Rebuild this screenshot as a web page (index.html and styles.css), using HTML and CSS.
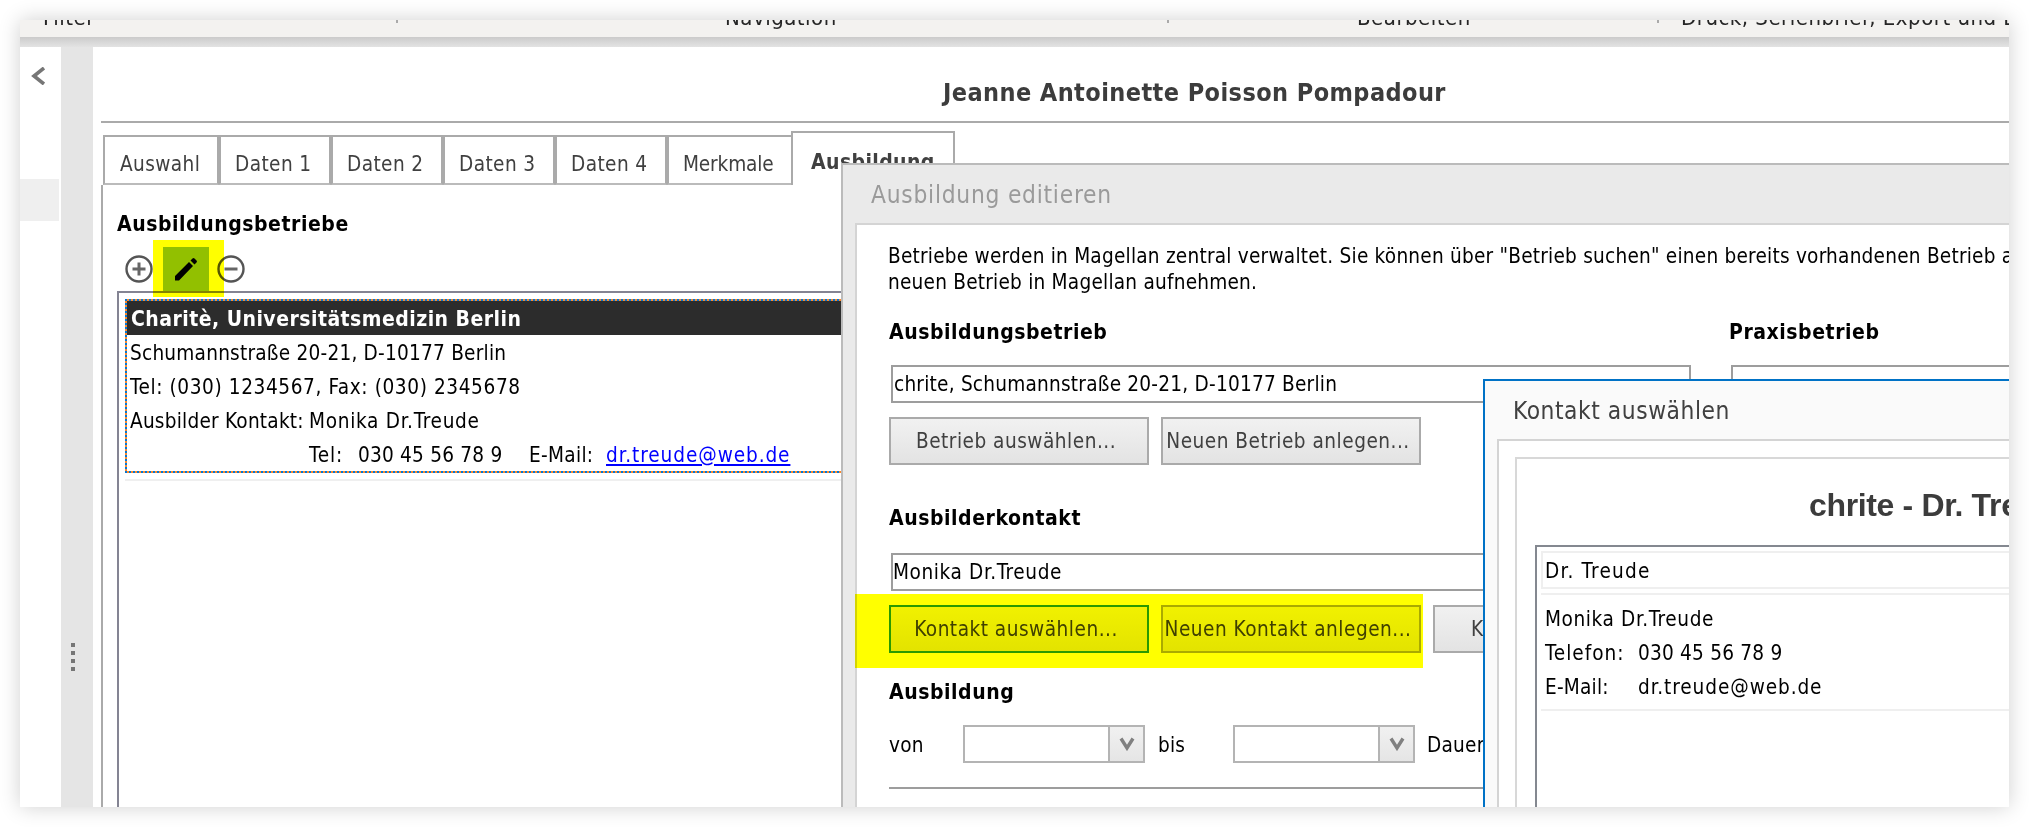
FILE: index.html
```
<!DOCTYPE html>
<html lang="de">
<head>
<meta charset="utf-8">
<title>Magellan – Ausbildung</title>
<link rel="stylesheet" href="styles.css">
</head>
<body>
<div class="screen">
  <header class="ribbon">
    <div class="group group-filter"><span>Filter</span><i class="tick"></i></div>
    <div class="group group-nav"><span>Navigation</span><i class="tick"></i></div>
    <div class="group group-edit"><span>Bearbeiten</span><i class="tick"></i></div>
    <div class="group group-print"><span>Druck, Serienbrief, Export und E</span></div>
  </header>
  <div class="ribbon-shadow"></div>
  <div class="workspace">
    <aside class="sidebar">
      <svg class="collapse" viewBox="0 0 14 18"><path d="M13 1 3 9l10 8" fill="none" stroke="#767676" stroke-width="3.600"/></svg>
      <div class="side-item"></div>
    </aside>
    <div class="splitter"><i></i><i></i><i></i><i></i></div>
    <main class="record">
      <h1 class="record-title"><span>Jeanne Antoinette Poisson Pompadour</span></h1>
      <nav class="tabs">
        <div class="tab tab-first"><span>Auswahl</span></div>
        <div class="tab"><span>Daten 1</span></div>
        <div class="tab"><span>Daten 2</span></div>
        <div class="tab"><span>Daten 3</span></div>
        <div class="tab"><span>Daten 4</span></div>
        <div class="tab tab-wide"><span>Merkmale</span></div>
        <div class="tab tab-active"><span>Ausbildung</span></div>
      </nav>
      <section class="page">
        <h2 class="label"><span>Ausbildungsbetriebe</span></h2>
        <div class="tools">
          <svg class="round" viewBox="0 0 28 28"><circle cx="14" cy="14" r="12.500" fill="none" stroke="#555" stroke-width="2.400"/><path d="M14 7.500v13M7.500 14h13" stroke="#666" stroke-width="3"/></svg>
          <span class="edit"><svg viewBox="0 0 26 26"><path d="M2 24.500v-4.500L16 6l4 4L6 24.500zM17.500 4.500l2-2q1-1 2 0l2 2q1 1 0 2l-2 2z" fill="#000"/></svg></span>
          <svg class="round" viewBox="0 0 28 28"><circle cx="14" cy="14" r="12.500" fill="none" stroke="#555" stroke-width="2.400"/><path d="M7.500 14h13" stroke="#666" stroke-width="3"/></svg>
          <div class="marker marker-edit"></div>
        </div>
        <div class="company-list">
          <div class="company">
            <div class="company-name"><span>Charitè, Universitätsmedizin Berlin</span></div>
            <div class="line"><span>Schumannstraße 20-21, D-10177 Berlin</span></div>
            <div class="line"><span class="wide">Tel: (030) 1234567, Fax: (030) 2345678</span></div>
            <div class="line"><span class="col-contact">Ausbilder Kontakt:</span><span class="wide">Monika Dr.Treude</span></div>
            <div class="line"><span class="col-contact"></span><span class="col-tel">Tel:</span><span class="col-phone">030 45 56 78 9</span><span class="col-mail">E-Mail:</span><a class="mail">dr.treude@web.de</a></div>
          </div>
          <div class="rule-light"></div>
        </div>
      </section>
    </main>
  </div>

  <div class="dialog">
    <div class="dialog-title"><span>Ausbildung editieren</span></div>
    <div class="dialog-body">
      <p class="hint"><span>Betriebe werden in Magellan zentral verwaltet. Sie können über "Betrieb suchen" einen bereits vorhandenen Betrieb a</span><br><span>neuen Betrieb in Magellan aufnehmen.</span></p>
      <div class="columns">
        <div class="col-main">
          <h2 class="label"><span>Ausbildungsbetrieb</span></h2>
          <div class="input"><span>chrite, Schumannstraße 20-21, D-10177 Berlin</span></div>
        </div>
        <div class="col-side">
          <h2 class="label"><span>Praxisbetrieb</span></h2>
          <div class="input"></div>
        </div>
      </div>
      <div class="buttons">
        <div class="button"><span>Betrieb auswählen...</span></div>
        <div class="button"><span>Neuen Betrieb anlegen...</span></div>
      </div>
      <h2 class="label label-contact"><span>Ausbilderkontakt</span></h2>
      <div class="input input-contact"><span class="wide">Monika Dr.Treude</span></div>
      <div class="buttons">
        <div class="button button-focus"><span>Kontakt auswählen...</span></div>
        <div class="button"><span>Neuen Kontakt anlegen...</span></div>
        <div class="button button-third"><span>K</span></div>
        <div class="marker marker-contact"></div>
      </div>
      <h2 class="label label-training"><span>Ausbildung</span></h2>
      <div class="period">
        <span class="period-from">von</span>
        <div class="combo"><i></i><b><svg viewBox="0 0 16 14"><path d="M2 1.500 8 11l6-9.500" fill="none" stroke="#808080" stroke-width="3.400"/></svg></b></div>
        <span class="period-to">bis</span>
        <div class="combo"><i></i><b><svg viewBox="0 0 16 14"><path d="M2 1.500 8 11l6-9.500" fill="none" stroke="#808080" stroke-width="3.400"/></svg></b></div>
        <span class="period-length">Dauer</span>
      </div>
      <div class="rule"></div>
    </div>
  </div>

  <div class="popup">
    <div class="popup-title"><span>Kontakt auswählen</span></div>
    <div class="popup-body">
      <div class="popup-group">
        <h2 class="popup-heading"><span>chrite - Dr. Treude</span></h2>
        <div class="contact-list">
          <div class="contact-head"><span>Dr. Treude</span></div>
          <div class="contact">
            <div class="line"><span class="wide">Monika Dr.Treude</span></div>
            <div class="line"><span class="col-key key-phone">Telefon:</span><span>030 45 56 78 9</span></div>
            <div class="line"><span class="col-key">E-Mail:</span><span class="address">dr.treude@web.de</span></div>
          </div>
        </div>
      </div>
    </div>
  </div>
</div>
</body>
</html>
```
FILE: styles.css
```
* { box-sizing: border-box; }
body {
  margin: 0;
  padding: 20px;
  height: 827px;
  overflow: hidden;
  background: #fff;
  color: #000;
  font: 20.6px/26px "DejaVu Sans Condensed", "DejaVu Sans", sans-serif;
  font-stretch: condensed;
  letter-spacing: .22px;
  white-space: nowrap;
}
h1, h2, p { margin: 0; }
h2 { font-size: inherit; }
.screen {
  position: relative;
  display: flex;
  flex-direction: column;
  width: 1989px;
  height: 787px;
  background: #fff;
  box-shadow: 0 0 20px rgba(0, 0, 0, .19);
}

/* ribbon */
.ribbon {
  display: flex;
  height: 17px;
  overflow: hidden;
  background: #f3f2f0;
  color: #262626;
  font-size: 22px;
  letter-spacing: .5px;
}
.group { display: flex; justify-content: space-between; }
.group span { margin-top: -15px; }
.group-filter { width: 378px; padding-left: 23px; }
.group-nav { width: 771px; padding-left: 327px; }
.group-edit { width: 490px; padding-left: 188px; }
.group-print { width: 350px; padding-left: 22px; overflow: hidden; }
.tick { width: 2px; height: 3px; background: #aaa; }
.ribbon-shadow { height: 10px; background: linear-gradient(#cbcbcb, #e3e3e3); }

/* work area */
.workspace { display: flex; flex: 1; min-height: 0; overflow: hidden; }
.sidebar { width: 41px; padding-top: 20px; }
.collapse { display: block; width: 14px; height: 18px; margin-left: 11px; }
.side-item { width: 39px; height: 42px; margin-top: 94px; background: #efefef; }
.splitter {
  display: flex;
  flex-direction: column;
  gap: 4px;
  width: 32px;
  padding: 596px 0 0 10px;
  background: #e5e5e5;
}
.splitter i { width: 4px; height: 4px; background: #767676; }
.record { flex: 1; min-width: 0; display: flex; flex-direction: column; padding-left: 8px; }
.record-title {
  height: 76px;
  padding: 33px 0 0 842px;
  border-bottom: 2px solid #aaa;
  color: #3c3c3c;
  font-size: 25px;
  line-height: 26px;
  letter-spacing: .42px;
}
.tabs { position: relative; display: flex; align-items: flex-end; height: 62px; padding-left: 2px; color: #404040; letter-spacing: .4px; }
.tab {
  width: 112px;
  height: 50px;
  padding: 16px 0 0 14px;
  border: 2px solid #aaa;
  border-bottom-color: #bbb;
  line-height: 22px;
}
.tab-first { width: 116px; padding-left: 15px; }
.tab-wide { width: 124px; border-right: 0; letter-spacing: -.15px; }
.tab-active {
  width: 164px;
  height: 54px;
  padding: 18px 0 0 18px;
  border-bottom: 0;
  font-size: 21px;
  font-weight: bold;
}
.page { flex: 1; min-height: 0; padding: 26px 0 0 14px; border-left: 2px solid #aaa; }
.label { font-size: 21px; line-height: 26px; font-weight: bold; letter-spacing: .55px; }
.tools { position: relative; display: flex; align-items: center; height: 44px; margin-top: 10px; padding-left: 8px; }
.round { width: 28px; height: 28px; }
.edit { display: flex; justify-content: center; align-items: center; width: 46px; height: 44px; margin: 0 8px 0 10px; background: #92c0e0; }
.edit svg { width: 26px; height: 26px; }
.marker { position: absolute; background: #ff0; mix-blend-mode: multiply; }
.marker-edit { left: 36px; top: -7px; width: 71px; height: 57px; z-index: 1; }
.company-list { height: 540px; padding: 6px 0 0 6px; border: 2px solid #848493; border-right: 0; }
.company {
  padding: 2px 0 2px 2px;
  height: 174px;
  background:
    repeating-linear-gradient(90deg, #0078d7 0 2px, #ff8728 2px 4px) 0 0 / 100% 2px no-repeat,
    repeating-linear-gradient(90deg, #0078d7 0 2px, #ff8728 2px 4px) 0 100% / 100% 2px no-repeat,
    repeating-linear-gradient(#0078d7 0 2px, #ff8728 2px 4px) 0 0 / 2px 100% no-repeat;
}
.company-name { height: 34px; padding-left: 4px; background: #2c2c2c; color: #fff; font-size: 21px; font-weight: bold; line-height: 37px; letter-spacing: .47px; }
.line { display: flex; height: 34px; line-height: 37px; }
.company .line { padding-left: 3px; }
.wide { letter-spacing: .6px; }
.company .col-contact + .wide { letter-spacing: .7px; }
.col-contact { width: 179px; }
.col-tel { width: 49px; letter-spacing: .9px; }
.col-phone { width: 171px; }
.col-mail { width: 77px; letter-spacing: .3px; }
.address { letter-spacing: .9px; }
.mail { letter-spacing: .9px; color: #00f; text-decoration: underline; text-decoration-thickness: 2px; text-underline-offset: 2px; }
.rule-light { height: 2px; margin-top: 6px; background: #efefef; }

/* edit dialog */
.dialog {
  position: absolute;
  left: 821px;
  top: 143px;
  right: 0;
  bottom: 0;
  overflow: hidden;
  border: 2px solid #bbb;
  border-width: 2px 0 0 2px;
  background: #eaeaea;
}
.dialog-title { height: 58px; padding: 16px 0 0 28px; color: #9a9a9a; font-size: 24.3px; line-height: 28px; letter-spacing: .75px; }
.dialog-body {
  height: 600px;
  margin-left: 12px;
  padding: 18px 0 0 31px;
  border: 2px solid #d4d4d4;
  border-width: 2px 0 0 2px;
  background: #fff;
}
.hint { line-height: 26px; letter-spacing: .22px; }
.columns { display: flex; gap: 40px; margin-top: 24px; }
.col-main { width: 803px; padding-left: 1px; }
.col-side { flex: 1; min-width: 0; margin-left: -2px; }
.input { height: 38px; margin: 20px 0 0 2px; padding-left: 1px; border: 2px solid #9d9d9d; line-height: 35px; }
.col-side .input { border-right: 0; }
.buttons { position: relative; display: flex; gap: 12px; margin: 14px 0 0 1px; letter-spacing: .5px; }
.button {
  width: 260px;
  height: 48px;
  border: 2px solid #aaa;
  background: linear-gradient(#f1f1f1, #e3e3e3);
  color: #404040;
  line-height: 45px;
  text-align: center;
}
.button span { margin-left: -6px; }
.button-focus { border-color: #2a9ad4; }
.button-third { padding-left: 42px; text-align: left; }
.marker-contact { left: -34px; top: -11px; width: 568px; height: 74px; }
.label-contact { margin: 40px 0 0 1px; }
.input-contact { width: 800px; margin: 22px 0 0 3px; padding-left: 0; }
.label-training { margin: 26px 0 0 1px; }
.period { display: flex; align-items: center; height: 38px; margin: 20px 0 0 1px; }
.period span { line-height: 28px; padding-top: 2px; }
.period-from { width: 74px; }
.period .period-to { width: 88px; padding-left: 13px; }
.period .period-length { padding-left: 12px; }
.combo { display: flex; width: 182px; height: 38px; border: 2px solid #b4b4b4; }
.combo i { flex: 1; }
.combo b { width: 35px; padding: 10px 0 0 9px; border-left: 2px solid #b4b4b4; background: linear-gradient(#f1f1f1, #e5e5e5); }
.combo svg { display: block; width: 16px; height: 14px; }
.rule { height: 2px; margin: 24px 0 0 1px; background: #9d9d9d; }

/* contact popup */
.popup {
  position: absolute;
  left: 1463px;
  top: 359px;
  right: 0;
  bottom: 0;
  overflow: hidden;
  border: 2px solid #0072c6;
  border-width: 2px 0 0 2px;
  background: #fafafa;
}
.popup-title { height: 58px; padding: 16px 0 0 28px; color: #404040; font-size: 24.3px; line-height: 28px; letter-spacing: .55px; }
.popup-body { height: 400px; margin-left: 12px; padding: 16px 0 0 16px; border: 2px solid #d4d4d4; border-width: 2px 0 0 2px; background: #fff; }
.popup-group { height: 400px; padding-left: 18px; border: 2px solid #d8d8d8; border-width: 2px 0 0 2px; }
.popup-heading { height: 86px; padding: 26px 0 0 274px; color: #3c3c3c; font: bold 32px/40px "Liberation Sans", Arial, sans-serif; letter-spacing: -.35px; }
.contact-list { height: 300px; padding: 4px 0 0 4px; border: 2px solid #848890; border-width: 2px 0 0 2px; }
.contact-head { height: 38px; padding-left: 2px; border: 2px solid #efefef; border-right: 0; line-height: 36px; letter-spacing: 1.2px; }
.contact { height: 118px; margin-top: 4px; padding: 6px 0 0 4px; border: 2px solid #efefef; border-width: 2px 0; }
.col-key { width: 93px; }
.key-phone { letter-spacing: 1px; }
```
